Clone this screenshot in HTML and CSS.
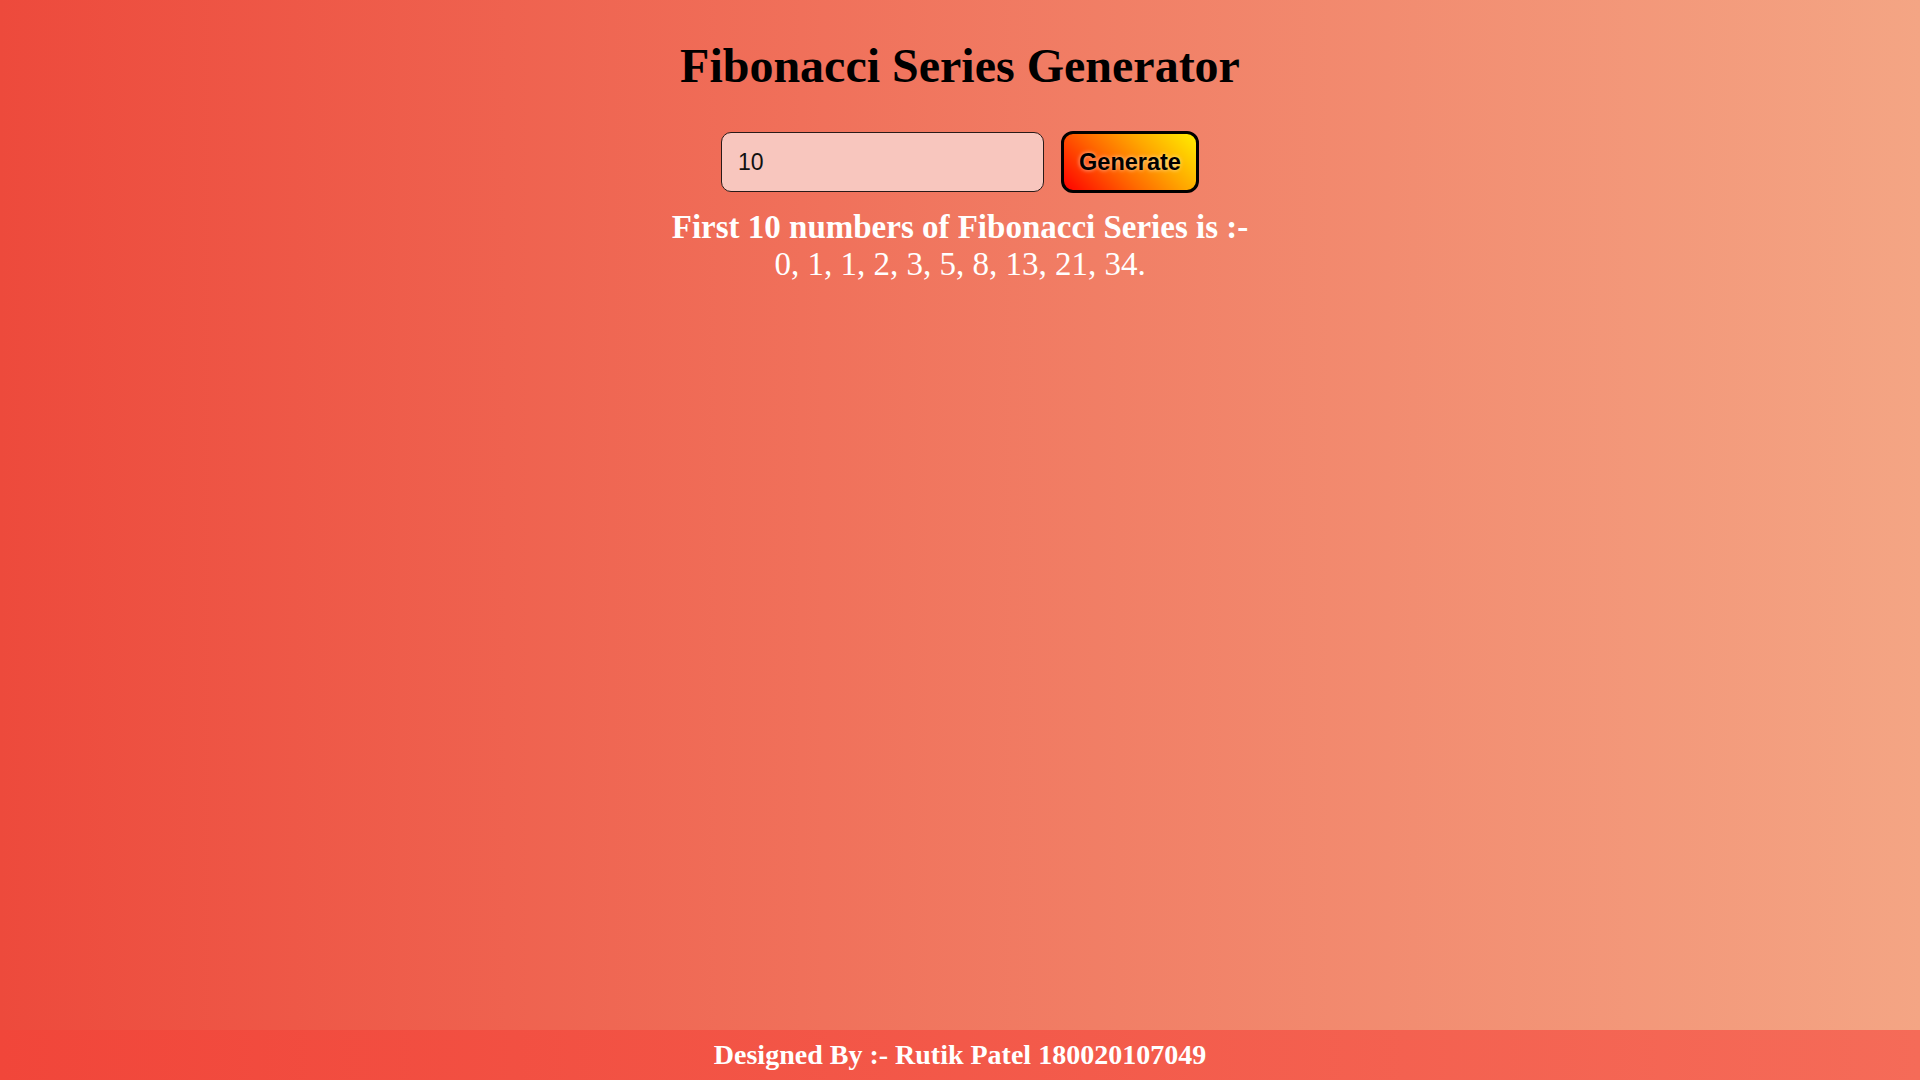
FILE: index.html
```html
<!DOCTYPE html>
<html lang="en">
<head>
<meta charset="utf-8">
<title>Fibonacci Series Generator</title>
<link rel="stylesheet" href="styles.css">
</head>
<body>
<main class="page">
  <h1 class="title">Fibonacci Series Generator</h1>
  <div class="form-row">
    <input class="num-input" type="text" value="10">
    <button class="gen-btn">Generate</button>
  </div>
  <div class="result">
    <div class="result-head">First 10 numbers of Fibonacci Series is :-</div>
    <div class="result-list">0, 1, 1, 2, 3, 5, 8, 13, 21, 34.</div>
  </div>
</main>
<footer class="footer">Designed By :- Rutik Patel 180020107049</footer>
</body>
</html>
```
FILE: styles.css
```css
html, body {
  margin: 0;
  padding: 0;
  height: 100%;
}
body {
  min-height: 100vh;
  display: flex;
  flex-direction: column;
  background: linear-gradient(to right, #ed4a3c, #f4a584);
  font-family: "Liberation Serif", "Times New Roman", serif;
}
.page {
  flex: 1;
  display: flex;
  flex-direction: column;
  align-items: center;
}
.title {
  margin: 38px 0 0;
  font-size: 48px;
  line-height: 55px;
  font-weight: bold;
  color: #000;
}
.form-row {
  margin-top: 38px;
  display: flex;
  align-items: center;
  gap: 17px;
}
.num-input {
  box-sizing: border-box;
  width: 323px;
  height: 60px;
  border: 1px solid #2a1a18;
  border-radius: 10px;
  background: #f8c6be;
  padding: 0 16px;
  font-family: "Liberation Sans", Arial, sans-serif;
  font-size: 23px;
  color: #111;
  outline: none;
}
.gen-btn {
  box-sizing: border-box;
  width: 138px;
  height: 62px;
  border: 3px solid #000;
  border-radius: 12px;
  background: linear-gradient(45deg, #ff0000 0%, #ff6a00 40%, #ffa500 65%, #ffee00 100%);
  font-family: "Liberation Sans", Arial, sans-serif;
  font-weight: bold;
  font-size: 23.5px;
  color: #000;
  text-shadow: 0 0 4px rgba(255,255,255,0.7);
  padding: 0;
  cursor: pointer;
}
.result {
  margin-top: 16px;
  text-align: center;
  color: #fff;
  font-size: 33px;
  line-height: 37px;
}
.result-head {
  font-weight: bold;
}
.footer {
  height: 50px;
  display: flex;
  align-items: center;
  justify-content: center;
  background: linear-gradient(to right, #f1463a, #f56b58);
  color: #fff;
  font-weight: bold;
  font-size: 28px;
}
```
